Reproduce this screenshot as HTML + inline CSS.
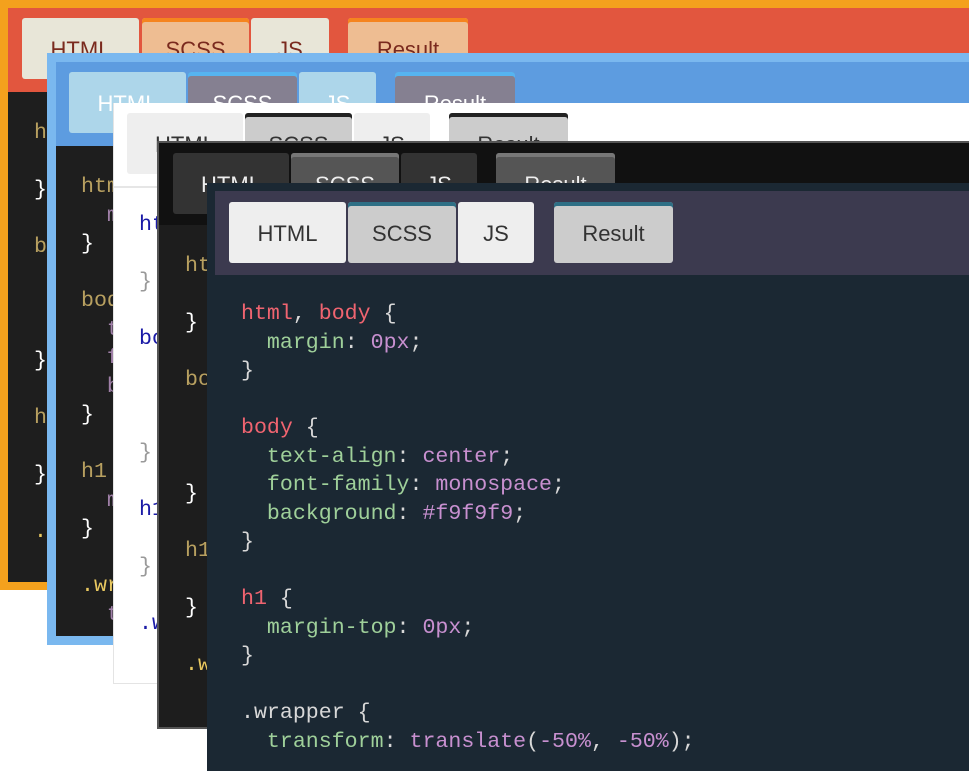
<!DOCTYPE html><html><head><style>
body{margin:0;width:969px;height:771px;overflow:hidden;background:#fff;position:relative;font-family:"Liberation Sans",sans-serif}
div{position:absolute;box-sizing:border-box}
.t{height:61px;font-size:22px;display:flex;align-items:center;justify-content:center;border-radius:3px;padding-top:2px}
pre{position:absolute;margin:0;font-family:"Liberation Mono",monospace;font-size:21.6px;line-height:28.5px}
</style></head><body>
<!-- L1 -->
<div style="left:0;top:0;width:969px;height:590px;background:#f4a11d"></div>
<div style="left:8px;top:8px;width:961px;height:84px;background:#e2563e"></div>
<div style="left:8px;top:92px;width:961px;height:490px;background:#1e1e1e"></div>
<div class="t" style="left:22px;top:18px;width:117px;background:#e8e6d8;color:#7a2a1e">HTML</div>
<div class="t" style="left:142px;top:18px;width:107px;background:#eebd92;color:#7a2a1e;box-shadow:inset 0 4px #f5841f">SCSS</div>
<div class="t" style="left:251px;top:18px;width:78px;background:#e8e6d8;color:#7a2a1e">JS</div>
<div class="t" style="left:348px;top:18px;width:120px;background:#eebd92;color:#7a2a1e;box-shadow:inset 0 4px #f5841f">Result</div>
<pre style="left:34px;top:119px;color:#fff"><span style="color:#b8a060">html, body</span> {
  margin
}

<span style="color:#b8a060">body</span> {



}

<span style="color:#b8a060">h1</span> {

}

<span style="color:#e8c860">.wrapper</span></pre>
<!-- L2 -->
<div style="left:47px;top:53px;width:922px;height:592px;background:#7ab8ef"></div>
<div style="left:56px;top:62px;width:913px;height:84px;background:#5d9ce0"></div>
<div style="left:56px;top:146px;width:913px;height:490px;background:#1e1e1e"></div>
<div class="t" style="left:69px;top:72px;width:117px;background:#add6ea;color:#fff">HTML</div>
<div class="t" style="left:188px;top:72px;width:109px;background:#858091;color:#fff;box-shadow:inset 0 4px #56b4f0">SCSS</div>
<div class="t" style="left:299px;top:72px;width:77px;background:#add6ea;color:#fff">JS</div>
<div class="t" style="left:395px;top:72px;width:120px;background:#858091;color:#fff;box-shadow:inset 0 4px #56b4f0">Result</div>
<pre style="left:81px;top:173px;color:#fff"><span style="color:#b8a060">html, body</span> {
  <span style="color:#a080a8">margin</span>
}

<span style="color:#b8a060">body</span> {
  <span style="color:#a080a8">text-align</span>
  <span style="color:#a080a8">font-family</span>
  <span style="color:#a080a8">background</span>
}

<span style="color:#b8a060">h1</span> {
  <span style="color:#a080a8">margin</span>
}

<span style="color:#e8c860">.wrapper</span> {
  <span style="color:#a080a8">transform</span></pre>
<!-- L3 -->
<div style="left:113px;top:103px;width:856px;height:581px;background:#fff;border-left:1px solid #e4e4e4;border-bottom:1px solid #e4e4e4"></div>
<div style="left:114px;top:186px;width:855px;height:2px;background:#e6e6e6"></div>
<div class="t" style="left:127px;top:113px;width:116px;background:#eee;color:#333">HTML</div>
<div class="t" style="left:245px;top:113px;width:107px;background:#ccc;color:#333;box-shadow:inset 0 4px #222">SCSS</div>
<div class="t" style="left:354px;top:113px;width:76px;background:#eee;color:#333">JS</div>
<div class="t" style="left:449px;top:113px;width:119px;background:#ccc;color:#333;box-shadow:inset 0 4px #222">Result</div>
<pre style="left:139px;top:211px;color:#999"><span style="color:#1a1aa6">html, body</span> {
  margin
}

<span style="color:#1a1aa6">body</span> {



}

<span style="color:#1a1aa6">h1</span> {

}

<span style="color:#1a1aa6">.wrapper</span></pre>
<!-- L4 -->
<div style="left:157px;top:141px;width:812px;height:588px;background:#1d1d1d;border:2px solid #555;border-right:none"></div>
<div style="left:159px;top:143px;width:810px;height:82px;background:#111"></div>
<div class="t" style="left:173px;top:153px;width:116px;background:#333;color:#eee">HTML</div>
<div class="t" style="left:291px;top:153px;width:108px;background:#555;color:#eee;box-shadow:inset 0 4px #777">SCSS</div>
<div class="t" style="left:401px;top:153px;width:76px;background:#333;color:#eee">JS</div>
<div class="t" style="left:496px;top:153px;width:119px;background:#555;color:#eee;box-shadow:inset 0 4px #777">Result</div>
<pre style="left:185px;top:252px;color:#fff"><span style="color:#b8a060">html, body</span> {
  margin
}

<span style="color:#b8a060">body</span> {



}

<span style="color:#b8a060">h1</span> {

}

<span style="color:#e8c860">.wrapper</span></pre>
<!-- L5 -->
<div style="left:207px;top:183px;width:762px;height:588px;background:#1b2833"></div>
<div style="left:215px;top:191px;width:754px;height:84px;background:#3c3a4f"></div>
<div class="t" style="left:229px;top:202px;width:117px;background:#eee;color:#333">HTML</div>
<div class="t" style="left:348px;top:202px;width:108px;background:#ccc;color:#333;box-shadow:inset 0 4px #2e6f85">SCSS</div>
<div class="t" style="left:458px;top:202px;width:76px;background:#eee;color:#333">JS</div>
<div class="t" style="left:554px;top:202px;width:119px;background:#ccc;color:#333;box-shadow:inset 0 4px #2e6f85">Result</div>
<pre style="left:241px;top:300px;color:#d8d8d8"><span style="color:#f06470">html</span>, <span style="color:#f06470">body</span> {
  <span style="color:#9fd09a">margin</span>: <span style="color:#c890d0">0px</span>;
}

<span style="color:#f06470">body</span> {
  <span style="color:#9fd09a">text-align</span>: <span style="color:#c890d0">center</span>;
  <span style="color:#9fd09a">font-family</span>: <span style="color:#c890d0">monospace</span>;
  <span style="color:#9fd09a">background</span>: <span style="color:#c890d0">#f9f9f9</span>;
}

<span style="color:#f06470">h1</span> {
  <span style="color:#9fd09a">margin-top</span>: <span style="color:#c890d0">0px</span>;
}

.wrapper {
  <span style="color:#9fd09a">transform</span>: <span style="color:#c890d0">translate</span>(<span style="color:#c890d0">-50%</span>, <span style="color:#c890d0">-50%</span>);</pre>
</body></html>
